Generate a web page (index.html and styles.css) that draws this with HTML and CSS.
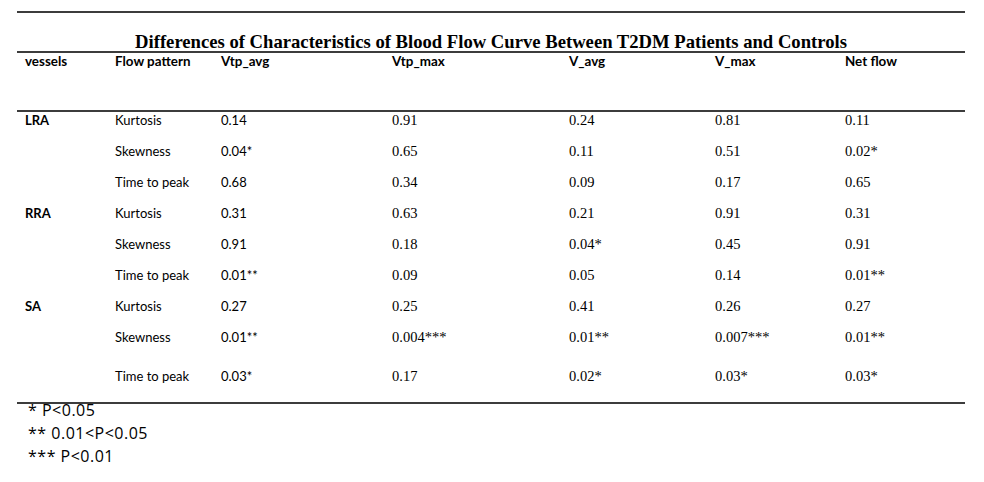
FILE: index.html
```html
<!DOCTYPE html>
<html>
<head>
<meta charset="utf-8">
<link rel="stylesheet" href="styles.css">
</head>
<body>
<div class="sheet">
  <div class="title">Differences of Characteristics of Blood Flow Curve Between T2DM Patients and Controls</div>
  <table class="grid">
    <colgroup>
      <col class="c1"><col class="c2"><col class="c3"><col class="c4"><col class="c5"><col class="c6"><col class="c7">
    </colgroup>
    <thead>
      <tr class="head">
        <th>vessels</th><th>Flow pattern</th><th>Vtp_avg</th><th>Vtp_max</th><th>V_avg</th><th>V_max</th><th>Net flow</th>
      </tr>
    </thead>
    <tbody>
      <tr><td class="v">LRA</td><td class="p">Kurtosis</td><td class="s">0.14</td><td>0.91</td><td>0.24</td><td>0.81</td><td>0.11</td></tr>
      <tr><td class="v"></td><td class="p">Skewness</td><td class="s">0.04*</td><td>0.65</td><td>0.11</td><td>0.51</td><td>0.02*</td></tr>
      <tr><td class="v"></td><td class="p">Time to peak</td><td class="s">0.68</td><td>0.34</td><td>0.09</td><td>0.17</td><td>0.65</td></tr>
      <tr><td class="v">RRA</td><td class="p">Kurtosis</td><td class="s">0.31</td><td>0.63</td><td>0.21</td><td>0.91</td><td>0.31</td></tr>
      <tr><td class="v"></td><td class="p">Skewness</td><td class="s">0.91</td><td>0.18</td><td>0.04*</td><td>0.45</td><td>0.91</td></tr>
      <tr><td class="v"></td><td class="p">Time to peak</td><td class="s">0.01**</td><td>0.09</td><td>0.05</td><td>0.14</td><td>0.01**</td></tr>
      <tr><td class="v">SA</td><td class="p">Kurtosis</td><td class="s">0.27</td><td>0.25</td><td>0.41</td><td>0.26</td><td>0.27</td></tr>
      <tr><td class="v"></td><td class="p">Skewness</td><td class="s">0.01**</td><td>0.004***</td><td>0.01**</td><td>0.007***</td><td>0.01**</td></tr>
      <tr class="last"><td class="v"></td><td class="p">Time to peak</td><td class="s">0.03*</td><td>0.17</td><td>0.02*</td><td>0.03*</td><td>0.03*</td></tr>
    </tbody>
  </table>
  <div class="notes">
    <div>* P&lt;0.05</div>
    <div>** 0.01&lt;P&lt;0.05</div>
    <div>*** P&lt;0.01</div>
  </div>
</div>
</body>
</html>
```

FILE: styles.css
```css
html, body {
  margin: 0;
  padding: 0;
  background: #ffffff;
}
body {
  color: #000;
}
.sheet {
  width: 948px;
  margin: 11px 0 0 17px;
  border-top: 2px solid #3c3c3c;
}
.title {
  font-family: "Liberation Serif", "Times New Roman", serif;
  font-weight: bold;
  font-size: 18.65px;
  line-height: 22px;
  text-align: center;
  padding-top: 18px;
  height: 20px;
  border-bottom: 2px solid #3c3c3c;
}
.grid {
  width: 948px;
  border-collapse: collapse;
  table-layout: fixed;
}
.c1 { width: 90px; }
.c2 { width: 106px; }
.c3 { width: 171px; }
.c4 { width: 177px; }
.c5 { width: 146px; }
.c6 { width: 130px; }
.c7 { width: 128px; }
.head th {
  font-family: "Lato", "Liberation Sans", sans-serif;
  font-weight: bold;
  font-size: 13.4px;
  line-height: 16px;
  text-align: left;
  vertical-align: top;
  padding: 0 0 0 8px;
  height: 57px;
  border-bottom: 2px solid #3c3c3c;
}
.grid td {
  font-family: "Liberation Serif", "Times New Roman", serif;
  font-size: 14.5px;
  line-height: 16px;
  vertical-align: top;
  padding: 0 0 0 8px;
  height: 31px;
}
.grid td.v {
  font-family: "Lato", "Liberation Sans", sans-serif;
  font-size: 13px;
  font-weight: bold;
}
.grid td.p, .grid td.s {
  font-family: "Lato", "Liberation Sans", sans-serif;
  font-size: 13px;
}
.grid tr.last td {
  padding-top: 8px;
  height: 34px;
}
.grid tbody tr:last-child td {
  border-bottom: 2px solid #3c3c3c;
}
.notes {
  font-family: "Open Sans", "Liberation Sans", sans-serif;
  font-size: 16px;
  letter-spacing: 0.5px;
  line-height: 23px;
  padding-left: 11px;
  margin-top: -5px;
}
```
